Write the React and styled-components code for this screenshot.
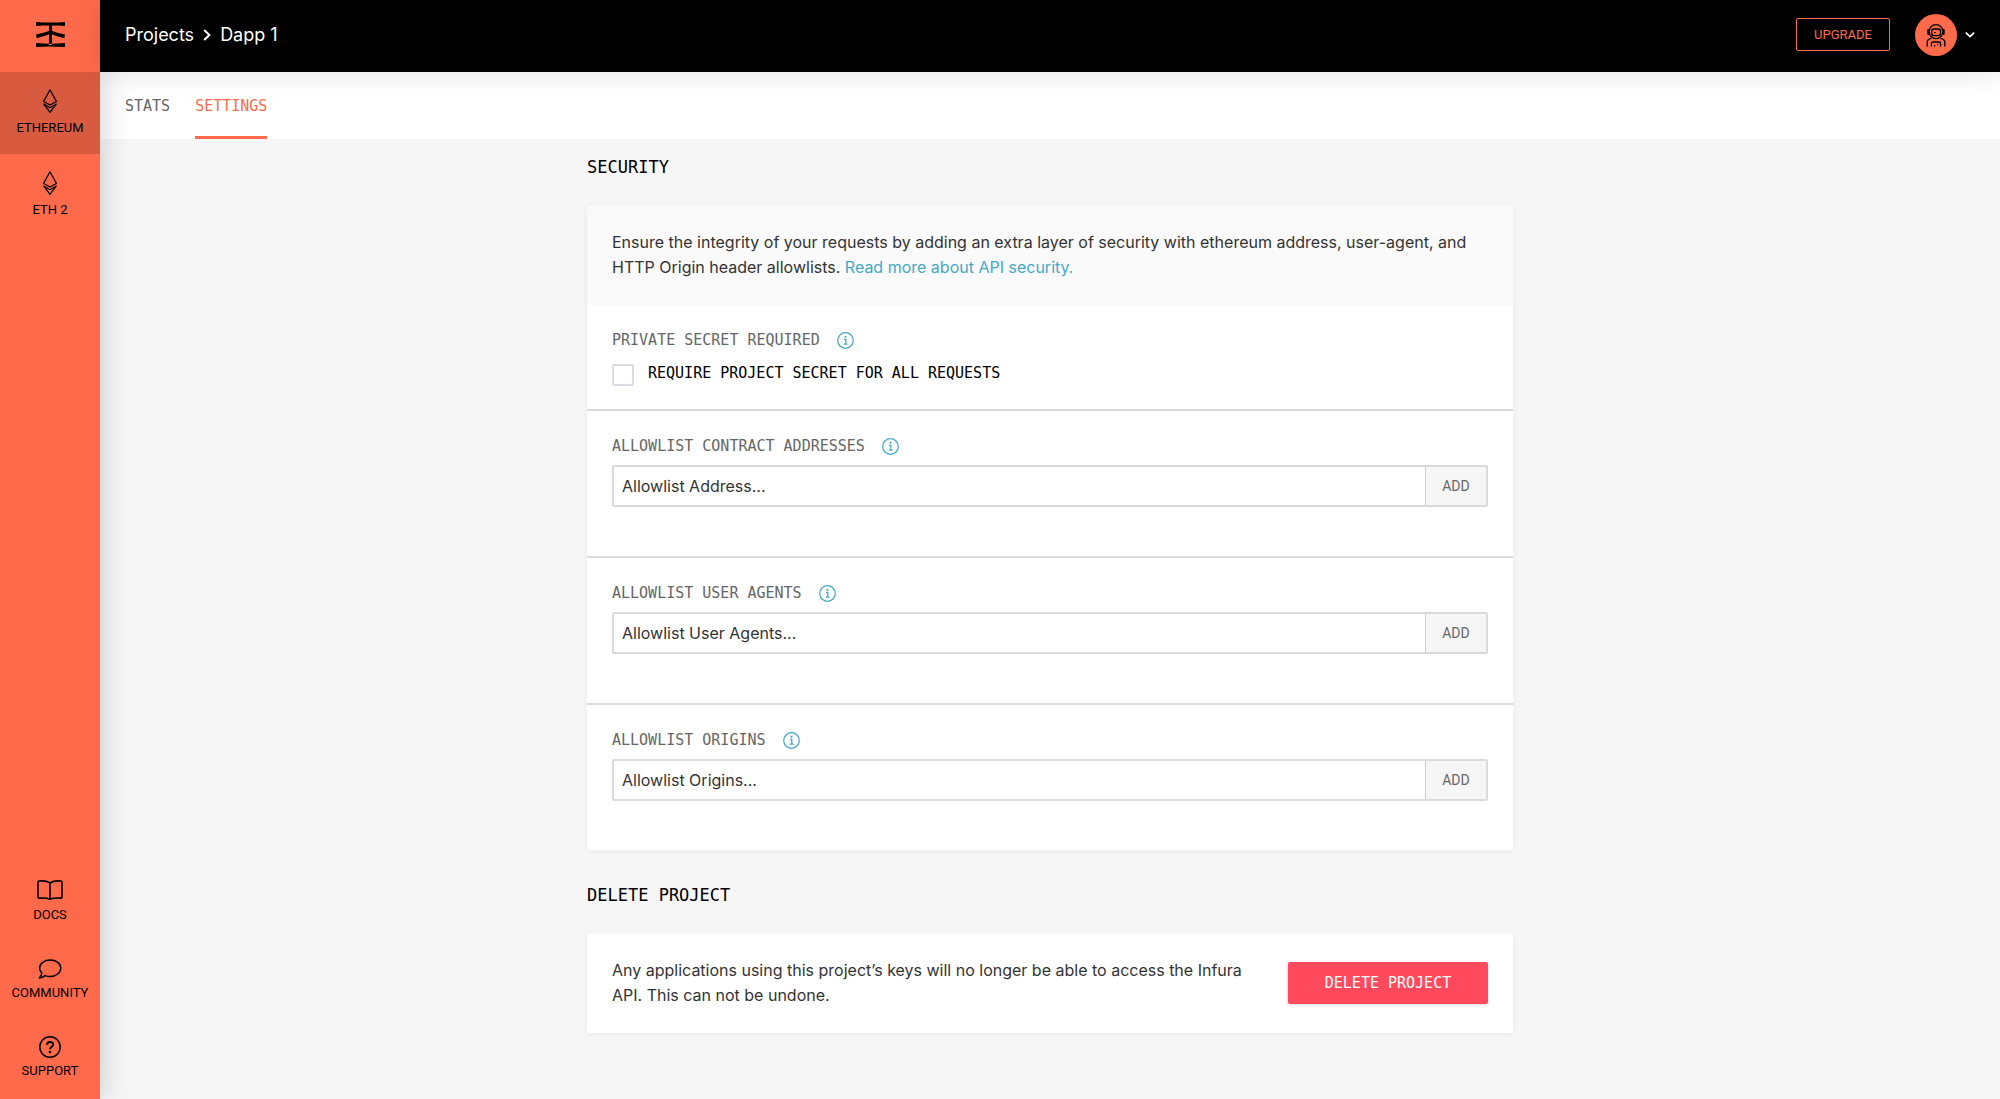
import React, { useId } from 'react';
import styled, { createGlobalStyle, ThemeProvider } from 'styled-components';

const theme = {
  accent: '#ff6b4a',
  accentDark: '#d95b3f',
  danger: '#ff4a5e',
  link: '#43a9c6',
  ink: '#333333',
  muted: '#666666',
  line: '#dadada',
  page: '#f6f6f6',
  sans: 'Inter, Roboto, "Liberation Sans", sans-serif',
  caps: 'Roboto, "Liberation Sans", sans-serif',
  mono: '"DejaVu Sans Mono", "Liberation Mono", monospace',
};

const GlobalStyle = createGlobalStyle`
  *, *::before, *::after { box-sizing: border-box; }
  body {
    margin: 0;
    background: ${theme.page};
    color: ${theme.ink};
    font-family: ${theme.sans};
    font-size: 16px;
    line-height: 25px;
  }
  h2, p, ul { margin: 0; padding: 0; }
  a { text-decoration: none; color: inherit; }
  button, input { font: inherit; margin: 0; }
  button { cursor: pointer; }
  svg { display: block; flex: none; }
`;

const Layout = styled.div`
  display: grid;
  grid-template-columns: 100px minmax(0, 1fr);
  min-height: 100vh;
`;

const Sidebar = styled.aside`
  position: sticky;
  top: 0;
  z-index: 2;
  display: flex;
  flex-direction: column;
  height: 100vh;
  background: ${(p) => p.theme.accent};
  color: #000;
  box-shadow: 0 0 30px rgba(0, 0, 0, 0.2);
`;

const LogoLink = styled.a`
  display: flex;
  align-items: center;
  justify-content: center;
  height: 72px;
  padding-bottom: 3px;
`;

const NavList = styled.ul`
  display: flex;
  flex-direction: column;
  list-style: none;
`;

const FooterList = styled(NavList)`
  gap: 33px;
  margin-top: auto;
  padding-bottom: 20px;
`;

const SideLink = styled.a`
  display: flex;
  flex-direction: column;
  align-items: center;
  gap: ${(p) => (p.$compact ? 5 : 7)}px;
  padding: ${(p) => (p.$compact ? '0' : '17px 0 18px')};
  background: ${(p) => (p.$active ? p.theme.accentDark : 'transparent')};
  font-family: ${(p) => p.theme.caps};
  font-size: 13px;
  line-height: 16px;
`;

const Page = styled.div`
  display: flex;
  flex-direction: column;
`;

const Header = styled.header`
  position: relative;
  z-index: 3;
  display: flex;
  align-items: center;
  justify-content: space-between;
  height: 72px;
  padding: 0 25px 3px;
  background: #000;
  color: #fff;
  box-shadow: 0 0 30px rgba(0, 0, 0, 0.12);
`;

const Breadcrumbs = styled.nav`
  display: flex;
  align-items: center;
  gap: 9px;
  font-size: 18px;
`;

const HeaderActions = styled.div`
  display: flex;
  align-items: center;
  gap: 25px;
`;

const UpgradeButton = styled.button`
  width: 94px;
  height: 33px;
  padding: 0;
  border: 1px solid ${(p) => p.theme.accent};
  border-radius: 2px;
  background: transparent;
  color: ${(p) => p.theme.accent};
  font-family: ${(p) => p.theme.caps};
  font-size: 13px;
`;

const AccountButton = styled.button`
  display: flex;
  align-items: center;
  gap: 8px;
  padding: 0;
  border: 0;
  background: transparent;
  color: #fff;
`;

const Avatar = styled.span`
  display: flex;
  align-items: center;
  justify-content: center;
  width: 42px;
  height: 42px;
  border-radius: 50%;
  background: ${(p) => p.theme.accent};
  color: #000;
`;

const Tabs = styled.nav`
  display: flex;
  gap: 25px;
  height: 67px;
  padding: 0 25px;
  background: #fff;
`;

const Tab = styled.a`
  display: flex;
  align-items: center;
  padding-top: 5px;
  border-bottom: 3px solid ${(p) => (p.$active ? p.theme.accent : 'transparent')};
  color: ${(p) => (p.$active ? p.theme.accent : p.theme.muted)};
  font-family: ${(p) => p.theme.mono};
  font-size: 15px;
`;

const Main = styled.main`
  display: flex;
  flex-direction: column;
  gap: 32px;
  width: 100%;
  max-width: 926px;
  margin: 0 auto;
  padding: 15px 0 50px;
`;

const Block = styled.section`
  display: flex;
  flex-direction: column;
  gap: 25px;
`;

const Heading = styled.h2`
  color: #000;
  font-family: ${(p) => p.theme.mono};
  font-size: 17px;
  font-weight: 400;
  line-height: 26px;
`;

const Card = styled.div`
  overflow: hidden;
  border-radius: 2px;
  background: #fff;
  box-shadow: 0 1px 6px rgba(0, 0, 0, 0.06);
`;

const Intro = styled.p`
  padding: 25px;
  background: #fafafa;
`;

const TextLink = styled.a`
  color: ${(p) => p.theme.link};
`;

const Setting = styled.div`
  padding: 23px 25px;
`;

const ListSetting = styled.form`
  display: flex;
  flex-direction: column;
  gap: 7px;
  padding: 23px 25px 49px;
  border-top: 2px solid ${(p) => p.theme.line};
`;

const LabelRow = styled.div`
  display: flex;
  align-items: center;
  gap: 17px;
  height: 24px;
  color: ${(p) => p.theme.muted};
  font-family: ${(p) => p.theme.mono};
  font-size: 15px;
`;

const InfoButton = styled.button`
  display: flex;
  padding: 0;
  border: 0;
  background: transparent;
  color: ${(p) => p.theme.link};
`;

const CheckLabel = styled.label`
  display: flex;
  align-items: flex-start;
  gap: 14px;
  padding-top: 12px;
  color: #000;
  font-family: ${(p) => p.theme.mono};
  font-size: 15px;
  line-height: 18px;
`;

const Checkbox = styled.input`
  appearance: none;
  width: 22px;
  height: 22px;
  border: 2px solid #d9dce4;
  border-radius: 2px;
  background: #fff;
  &:checked { background: ${(p) => p.theme.accent}; }
`;

const InputGroup = styled.div`
  display: flex;
  height: 42px;
  border: 2px solid ${(p) => p.theme.line};
  border-radius: 2px;
`;

const TextInput = styled.input`
  flex: 1;
  min-width: 0;
  padding: 0 8px;
  border: 0;
  outline: 0;
  background: transparent;
  color: ${(p) => p.theme.ink};
  &::placeholder { color: ${(p) => p.theme.ink}; opacity: 1; }
`;

const AddButton = styled.button`
  width: 61px;
  padding: 0;
  border: 0;
  border-left: 1px solid #cccccc;
  background: ${(p) => p.theme.page};
  color: ${(p) => p.theme.muted};
  font-family: ${(p) => p.theme.caps};
  font-size: 14px;
`;

const DangerRow = styled.div`
  display: flex;
  align-items: center;
  justify-content: space-between;
  gap: 25px;
  padding: 25px;
`;

const DangerButton = styled.button`
  flex: none;
  width: 200px;
  height: 42px;
  border: 0;
  border-radius: 2px;
  background: ${(p) => p.theme.danger};
  color: #fff;
  font-family: ${(p) => p.theme.mono};
  font-size: 15px;
  box-shadow: 0 1px 4px rgba(0, 0, 0, 0.14);
`;

const Logo = () => (
  <svg width="29" height="25" viewBox="0 0 29 25" aria-hidden="true">
    <path d="M0 0 Q14.5 1 29 0 V4 Q14.5 2.6 0 4Z M0 25 Q14.5 24 29 25 V21 Q14.5 22.4 0 21Z M13 2 H16 V23 H13Z" />
    <path d="M0 12.6 Q8 11 14.5 8.6 Q21 11 29 12.6 L28.3 16.3 Q20 14.2 14.5 11.8 Q9 14.2 .7 16.3Z" />
  </svg>
);

const EthIcon = () => (
  <svg width="14" height="24" viewBox="0 0 14 24" fill="none" stroke="currentColor" strokeWidth="1.2" strokeLinejoin="round" aria-hidden="true">
    <path d="M7 .8 L13.4 12.4 L7 16 L.6 12.4Z" />
    <path d="M.8 15.1 L7 18.7 L13.2 15.1 L7 23.4Z" />
  </svg>
);

const BookIcon = () => (
  <svg width="26" height="24" viewBox="0 0 26 24" fill="none" stroke="currentColor" strokeWidth="1.6" strokeLinejoin="round" aria-hidden="true">
    <path d="M13 5 C10.5 3.2 6 2.6 2.2 3 C1.4 3.1 1 3.5 1 4.2 V19 C1 19.8 1.4 20.2 2.2 20.1 C6 19.8 10.5 20 13 21.3 C15.5 20 20 19.8 23.8 20.1 C24.6 20.2 25 19.8 25 19 V4.2 C25 3.5 24.6 3.1 23.8 3 C20 2.6 15.5 3.2 13 5Z M13 5 V21.3" />
  </svg>
);

const ChatIcon = () => (
  <svg width="24" height="24" viewBox="0 0 24 24" fill="none" stroke="currentColor" strokeWidth="1.5" strokeLinejoin="round" aria-hidden="true">
    <path d="M12.2 4 C6.4 4 1.6 7.5 1.6 12 C1.6 14 2.5 15.8 3.9 17.2 C3.6 19 2.6 20.6 1.4 22 C3.8 22 5.8 21.1 7.2 19.6 C8.7 20.2 10.5 20.5 12.2 20.5 C18.2 20.5 22.8 16.6 22.8 12 C22.8 7.5 18.2 4 12.2 4Z" />
  </svg>
);

const HelpIcon = () => (
  <svg width="24" height="24" viewBox="0 0 24 24" fill="none" stroke="currentColor" aria-hidden="true">
    <circle cx="12" cy="13" r="10.2" strokeWidth="1.5" />
    <path d="M9 10.8 C9 9 10.3 8 12.1 8 C13.9 8 15.2 9 15.2 10.6 C15.2 12.8 12.1 12.8 12.1 15.2" strokeWidth="2" />
    <circle cx="12" cy="18" r="1.3" fill="currentColor" stroke="none" />
  </svg>
);

const CrumbChevron = () => (
  <svg width="8" height="12" viewBox="0 0 8 12" fill="none" stroke="currentColor" strokeWidth="2" aria-hidden="true">
    <path d="M1.2 1 L6.4 6 L1.2 11" />
  </svg>
);

const DownChevron = () => (
  <svg width="10" height="8" viewBox="0 0 10 8" fill="none" stroke="currentColor" strokeWidth="1.8" aria-hidden="true">
    <path d="M.8 1.6 L5 5.6 L9.2 1.6" />
  </svg>
);

const AstronautIcon = () => (
  <svg width="20" height="24" viewBox="0 0 20 24" fill="none" stroke="currentColor" strokeWidth="1.4" strokeLinecap="round" strokeLinejoin="round" aria-hidden="true">
    <circle cx="10" cy="8.6" r="7" />
    <rect x="5.6" y="6" width="9" height="6.6" rx="2.6" />
    <path d="M2.2 7 V11 M17.8 7 V11" strokeWidth="1.8" />
    <path d="M8.6 9.6 H9.2" />
    <path d="M1.2 23 V19.6 C1.2 17.4 2.8 15.8 5 15.6 M18.8 23 V19.6 C18.8 17.4 17.2 15.8 15 15.6" />
    <path d="M5.4 23 V20.6 C5.4 19.6 6 19 7 19 H13 C14 19 14.6 19.6 14.6 20.6 V23" />
    <path d="M8.6 22.6 V23 M11.8 21.4 V21.6" strokeWidth="1.3" />
  </svg>
);

const InfoIcon = () => (
  <svg width="17" height="17" viewBox="0 0 17 17" fill="none" stroke="currentColor" aria-hidden="true">
    <circle cx="8.5" cy="8.5" r="7.8" strokeWidth="1.2" />
    <path d="M7 7.4 H8.8 V12 M6.8 12.2 H10.6" strokeWidth="1.3" />
    <circle cx="8.5" cy="4.8" r="1.1" fill="currentColor" stroke="none" />
  </svg>
);

const networks = [
  { label: 'ETHEREUM', active: true },
  { label: 'ETH 2', active: false },
];

const resources = [
  { label: 'DOCS', Icon: BookIcon },
  { label: 'COMMUNITY', Icon: ChatIcon },
  { label: 'SUPPORT', Icon: HelpIcon },
];

const allowlists = [
  { label: 'ALLOWLIST CONTRACT ADDRESSES', placeholder: 'Allowlist Address...' },
  { label: 'ALLOWLIST USER AGENTS', placeholder: 'Allowlist User Agents...' },
  { label: 'ALLOWLIST ORIGINS', placeholder: 'Allowlist Origins...' },
];

function Allowlist({ label, placeholder }) {
  const id = useId();
  return (
    <ListSetting onSubmit={(e) => e.preventDefault()}>
      <LabelRow>
        <label htmlFor={id}>{label}</label>
        <InfoButton type="button" aria-label="More information"><InfoIcon /></InfoButton>
      </LabelRow>
      <InputGroup>
        <TextInput id={id} type="text" placeholder={placeholder} />
        <AddButton type="submit">ADD</AddButton>
      </InputGroup>
    </ListSetting>
  );
}

export default function App() {
  return (
    <ThemeProvider theme={theme}>
      <GlobalStyle />
      <Layout>
        <Sidebar>
          <LogoLink href="#" aria-label="Home"><Logo /></LogoLink>
          <NavList>
            {networks.map(({ label, active }) => (
              <li key={label}>
                <SideLink href="#" $active={active}><EthIcon />{label}</SideLink>
              </li>
            ))}
          </NavList>
          <FooterList>
            {resources.map(({ label, Icon }) => (
              <li key={label}>
                <SideLink href="#" $compact><Icon />{label}</SideLink>
              </li>
            ))}
          </FooterList>
        </Sidebar>
        <Page>
          <Header>
            <Breadcrumbs>
              <a href="#">Projects</a>
              <CrumbChevron />
              <span>Dapp 1</span>
            </Breadcrumbs>
            <HeaderActions>
              <UpgradeButton type="button">UPGRADE</UpgradeButton>
              <AccountButton type="button" aria-label="Account">
                <Avatar><AstronautIcon /></Avatar>
                <DownChevron />
              </AccountButton>
            </HeaderActions>
          </Header>
          <Tabs>
            <Tab href="#">STATS</Tab>
            <Tab href="#" $active>SETTINGS</Tab>
          </Tabs>
          <Main>
            <Block>
              <Heading>SECURITY</Heading>
              <Card>
                <Intro>
                  Ensure the integrity of your requests by adding an extra layer of security with
                  ethereum address, user-agent, and HTTP Origin header allowlists.{' '}
                  <TextLink href="#">Read more about API security.</TextLink>
                </Intro>
                <Setting>
                  <LabelRow>
                    <span>PRIVATE SECRET REQUIRED</span>
                    <InfoButton type="button" aria-label="More information"><InfoIcon /></InfoButton>
                  </LabelRow>
                  <CheckLabel>
                    <Checkbox type="checkbox" />
                    REQUIRE PROJECT SECRET FOR ALL REQUESTS
                  </CheckLabel>
                </Setting>
                {allowlists.map((item) => <Allowlist key={item.label} {...item} />)}
              </Card>
            </Block>
            <Block>
              <Heading>DELETE PROJECT</Heading>
              <Card>
                <DangerRow>
                  <p>
                    Any applications using this project’s keys will no longer be able to access the
                    Infura API. This can not be undone.
                  </p>
                  <DangerButton type="button">DELETE PROJECT</DangerButton>
                </DangerRow>
              </Card>
            </Block>
          </Main>
        </Page>
      </Layout>
    </ThemeProvider>
  );
}
